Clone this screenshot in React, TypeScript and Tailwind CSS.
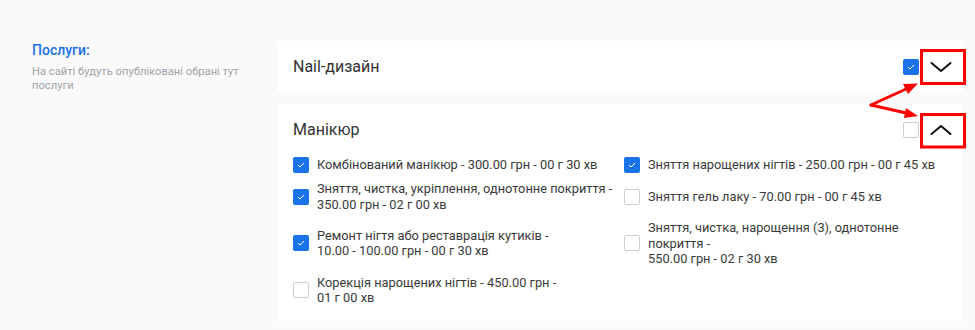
import React from 'react';

type Item = { lines: string[]; checked: boolean } | null;

// rows of the two-column grid: [left, right]
const rows: [Item, Item][] = [
  [
    { lines: ['Комбінований манікюр - 300.00 грн - 00 г 30 хв'], checked: true },
    { lines: ['Зняття нарощених нігтів - 250.00 грн - 00 г 45 хв'], checked: true },
  ],
  [
    { lines: ['Зняття, чистка, укріплення, однотонне покриття - 350.00 грн - 02 г 00 хв'], checked: true },
    { lines: ['Зняття гель лаку - 70.00 грн - 00 г 45 хв'], checked: false },
  ],
  [
    { lines: ['Ремонт нігтя або реставрація кутиків -', '10.00 - 100.00 грн - 00 г 30 хв'], checked: true },
    { lines: ['Зняття, чистка, нарощення (3), однотонне покриття -', '550.00 грн - 02 г 30 хв'], checked: false },
  ],
  [{ lines: ['Корекція нарощених нігтів - 450.00 грн -', '01 г 00 хв'], checked: false }, null],
];

const Checkbox: React.FC<{ checked: boolean }> = ({ checked }) =>
  checked ? (
    <span className="flex h-4 w-4 shrink-0 items-center justify-center rounded-[2px] bg-[#1a73e8]">
      <svg width="16" height="16" viewBox="0 0 16 16" fill="none">
        <path d="M5.2 8.3 L7 10 L10.8 6.2" stroke="white" strokeWidth="1" strokeLinecap="round" strokeLinejoin="round" />
      </svg>
    </span>
  ) : (
    <span className="h-4 w-4 shrink-0 rounded-[2px] border border-[#c9ced6] bg-white" />
  );

const Chevron: React.FC<{ up?: boolean }> = ({ up }) => (
  <svg width="22" height="12" viewBox="0 0 22 12" fill="none">
    <path
      d={up ? 'M1.5 10 L11 2 L20.5 10' : 'M1.5 2 L11 10 L20.5 2'}
      stroke="#111"
      strokeWidth="2"
      strokeLinecap="round"
      strokeLinejoin="round"
    />
  </svg>
);

const ServiceRow: React.FC<{ item: Item }> = ({ item }) => {
  if (!item) return <div />;
  return (
    <div className="flex items-center gap-2">
      <Checkbox checked={item.checked} />
      <p className="max-w-[297px] text-[12.8px] leading-[15.5px] text-[#3a3a3a]">
        {item.lines.map((l, i) => (
          <React.Fragment key={i}>
            {i > 0 && <br />}
            {l}
          </React.Fragment>
        ))}
      </p>
    </div>
  );
};

const CardHeader: React.FC<{ title: string; checked: boolean; open: boolean }> = ({ title, checked, open }) => (
  <div className="flex h-[19px] items-center justify-between">
    <span className="text-base leading-[19px] text-[#333]">{title}</span>
    <div className="-mr-4 flex items-center">
      <Checkbox checked={checked} />
      <button className="flex h-[19px] w-[44px] items-center justify-center">
        <Chevron up={open} />
      </button>
    </div>
  </div>
);

export default function App() {
  return (
    <div className="relative h-[330px] w-[975px] overflow-hidden bg-[#fafafa] font-['Roboto',sans-serif]">
      <div className="flex pt-[41px] pl-8">
        <div className="w-[245px] shrink-0">
          <h2 className="text-[14px] font-medium leading-[18px] text-[#1a6fe8]">Послуги:</h2>
          <p className="mt-[6px] w-[232px] text-[11.2px] leading-[14px] text-[#a0a4aa]">
            На сайті будуть опубліковані обрані тут послуги
          </p>
        </div>

        <div className="flex w-[686px] flex-col gap-3">
          <div className="bg-white px-4 py-4">
            <CardHeader title="Nail-дизайн" checked open={false} />
          </div>

          <div className="bg-white px-4 pt-4 pb-[15px]">
            <CardHeader title="Манікюр" checked={false} open />
            <div className="mt-[18px] grid grid-cols-[331px_1fr] items-center gap-y-2">
              {rows.map(([l, r], i) => (
                <React.Fragment key={i}>
                  <ServiceRow item={l} />
                  <ServiceRow item={r} />
                </React.Fragment>
              ))}
            </div>
          </div>
        </div>
      </div>

      {/* annotation layer */}
      <svg className="pointer-events-none absolute inset-0" width="975" height="330" viewBox="0 0 975 330">
        <rect x="921.5" y="50.5" width="43" height="33" fill="none" stroke="#ff0000" strokeWidth="3" />
        <rect x="921.5" y="114.5" width="43" height="32.5" fill="none" stroke="#ff0000" strokeWidth="3" />
        <path d="M871 105 L906 89" stroke="#ff0000" strokeWidth="3" strokeLinecap="round" />
        <path d="M871 105 L906 113" stroke="#ff0000" strokeWidth="3" strokeLinecap="round" />
        <polygon points="918,83.5 903,84 908,94" fill="#ff0000" />
        <polygon points="918,116 906,108 904,118" fill="#ff0000" />
      </svg>
    </div>
  );
}
